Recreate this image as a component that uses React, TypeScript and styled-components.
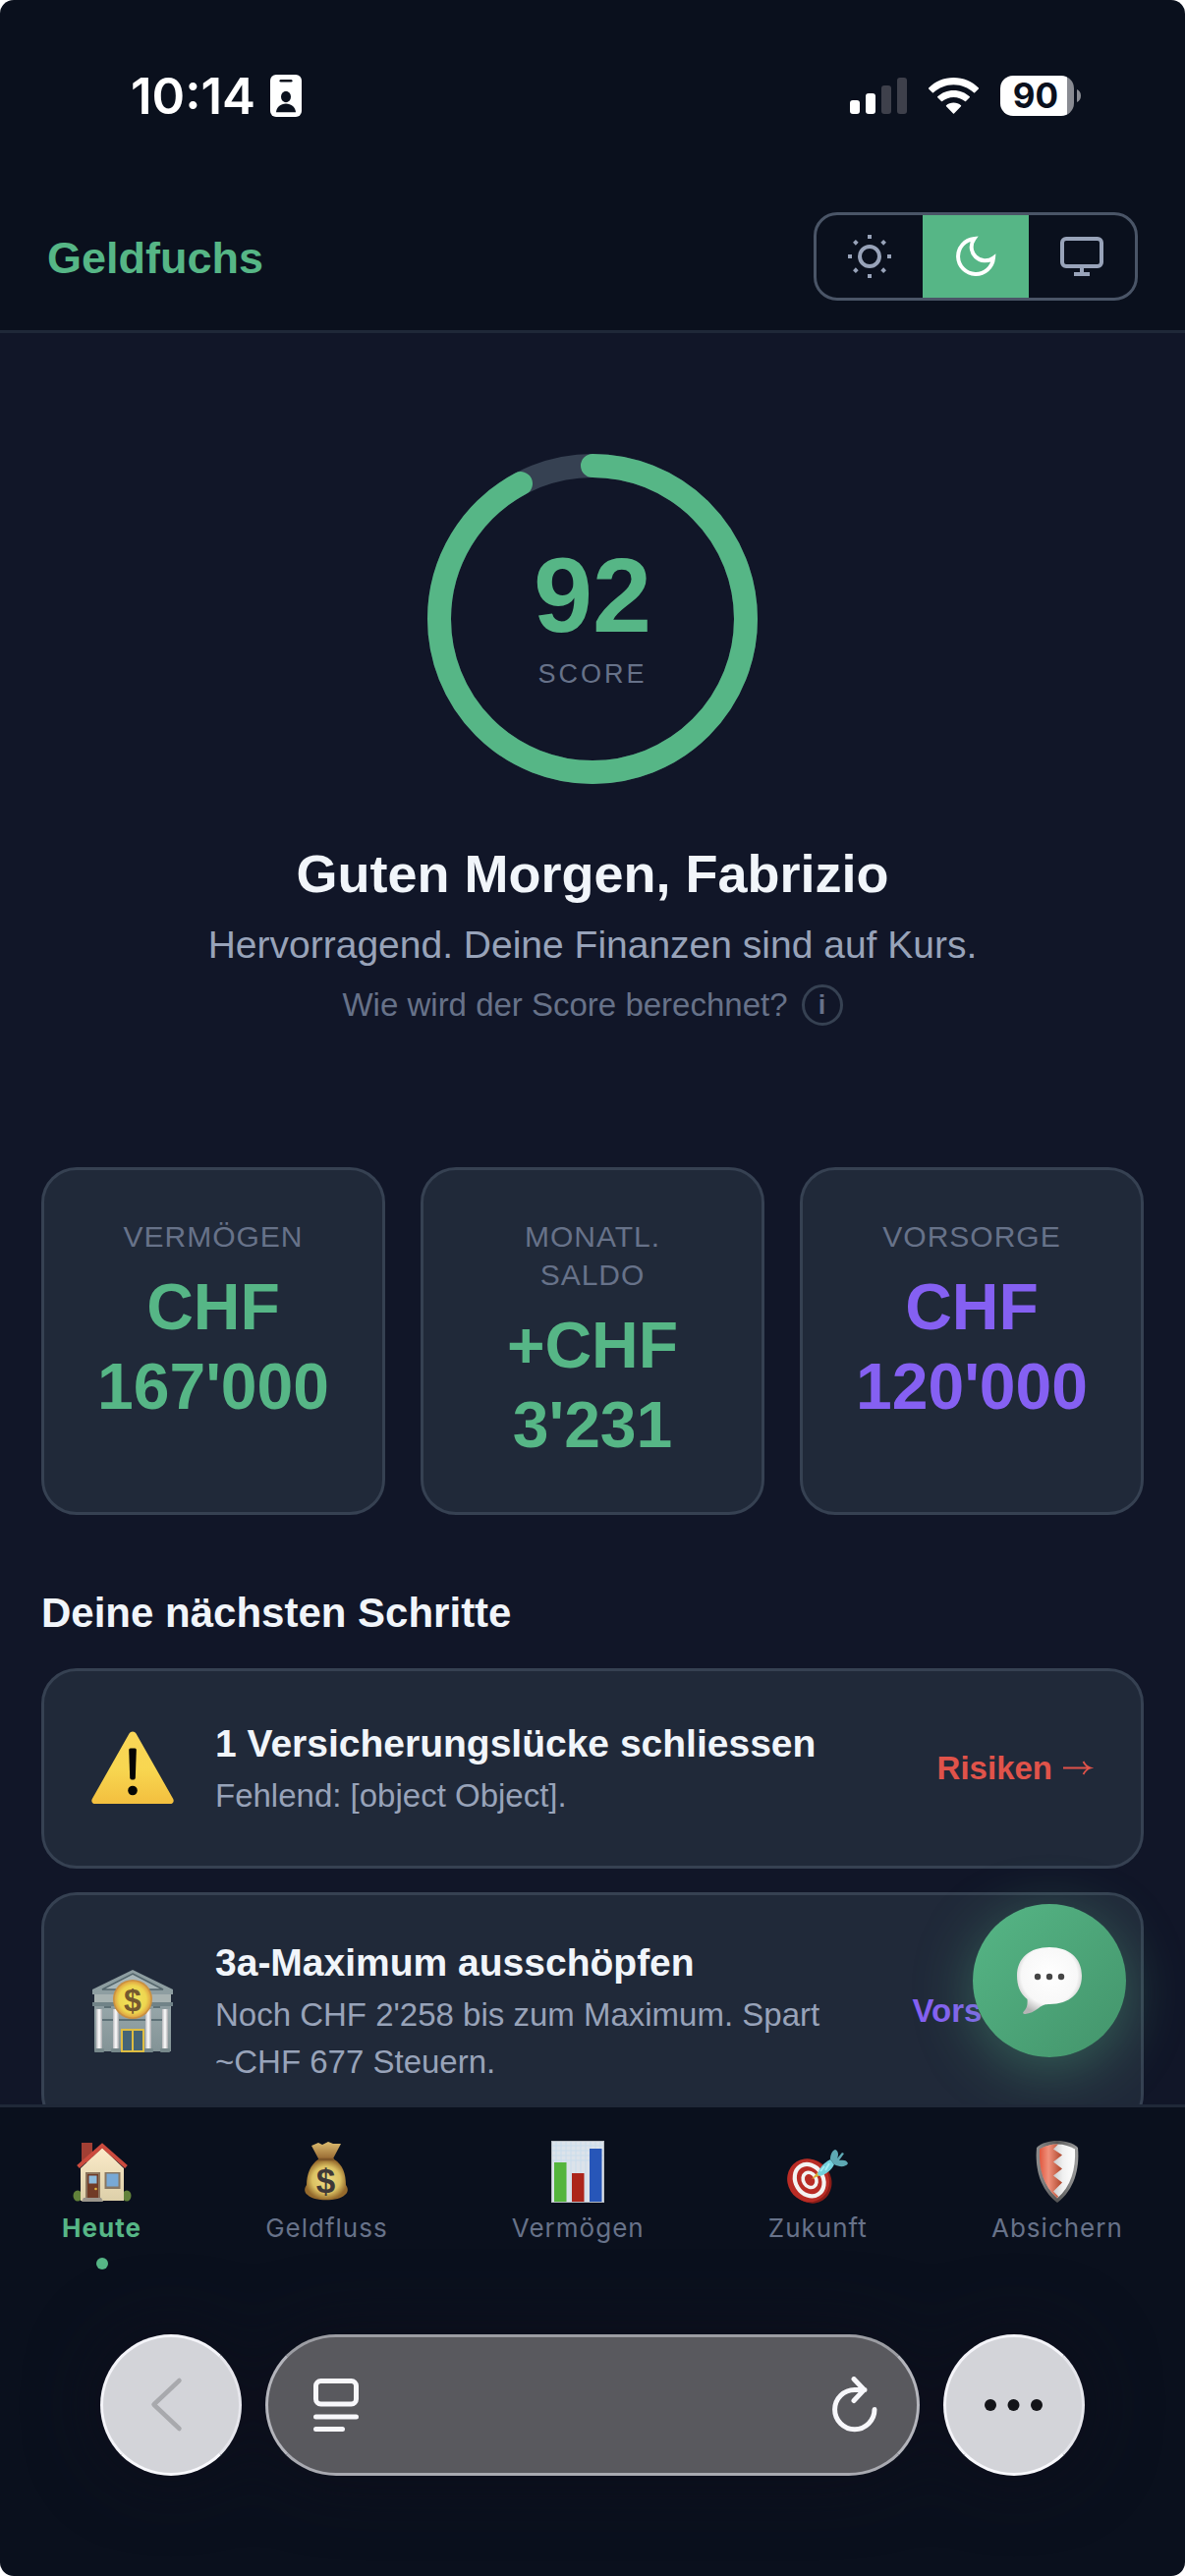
import React, { useState } from "react";
import styled, { createGlobalStyle, css } from "styled-components";

const color = {
  chrome: "#0a101d",
  page: "#111628",
  card: "#202939",
  line: "#364152",
  control: "#4a5567",
  text: "#f1f5fa",
  soft: "#98a3b9",
  muted: "#677289",
  green: "#56b686",
  purple: "#8560f2",
  red: "#e0534a",
};

const sans = `"Liberation Sans", Arial, Helvetica, sans-serif`;
const system = `Inter, "Liberation Sans", sans-serif`;

const GlobalStyle = createGlobalStyle`
  *, *::before, *::after { box-sizing: border-box; }
  html, body { margin: 0; padding: 0; background: #ffffff; }
  body { font-family: ${sans}; color: ${color.text}; }
  h1, h2, h3, p { margin: 0; }
  button { font: inherit; border: 0; padding: 0; background: none; color: inherit; cursor: pointer; }
  a { color: inherit; text-decoration: none; }
  svg { display: block; flex: none; }
`;

const Screen = styled.div`
  display: flex;
  flex-direction: column;
  height: 100vh;
  overflow: hidden;
  border-radius: 14px;
  background: ${color.chrome};
`;

/* ---------- status bar ---------- */

const StatusBar = styled.div`
  display: flex;
  align-items: center;
  justify-content: space-between;
  height: 186px;
  padding: 69px 106px 60px 133px;
  font-family: ${system};
`;

const StatusGroup = styled.div<{ $gap: number }>`
  display: flex;
  align-items: center;
  gap: ${(p) => p.$gap}px;
`;

const Clock = styled.span`
  font-size: 51px;
  line-height: 57px;
  font-weight: 600;
  color: #ffffff;
`;

const Battery = styled.div`
  display: flex;
  align-items: center;
  gap: 3px;
`;

const BatteryBody = styled.div`
  width: 75px;
  height: 41px;
  border-radius: 13px;
  padding-right: 3px;
  background: linear-gradient(90deg, #ffffff 0 68px, #898b92 68px);
  color: ${color.chrome};
  font-size: 35px;
  line-height: 41px;
  font-weight: 700;
  text-align: center;
`;

/* ---------- header ---------- */

const Header = styled.header`
  display: flex;
  align-items: center;
  justify-content: space-between;
  padding: 30px 48px;
  border-bottom: 3px solid #1f2838;
`;

const Brand = styled.a`
  padding-top: 4px;
  font-size: 45px;
  line-height: 54px;
  font-weight: 700;
  color: ${color.green};
`;

const ThemeSwitch = styled.div`
  display: flex;
  overflow: hidden;
  border: 3px solid ${color.control};
  border-radius: 24px;
`;

const ThemeButton = styled.button<{ $active: boolean }>`
  display: grid;
  place-items: center;
  width: 108px;
  height: 84px;
  color: ${(p) => (p.$active ? "#ffffff" : color.soft)};
  background: ${(p) => (p.$active ? color.green : "transparent")};
`;

/* ---------- content ---------- */

const Viewport = styled.div`
  position: relative;
  flex: 1;
  min-height: 0;
  overflow: hidden;
  background: ${color.page};
`;

const Main = styled.main`
  padding: 123px 42px 0;
`;

const Hero = styled.section`
  display: flex;
  flex-direction: column;
  align-items: center;
  text-align: center;
`;

const Gauge = styled.div`
  display: grid;
  place-items: center;
  width: 336px;
  height: 336px;
  > * { grid-area: 1 / 1; }
`;

const GaugeText = styled.div`
  display: flex;
  flex-direction: column;
  align-items: center;
  gap: 8px;
  padding-bottom: 4px;
`;

const GaugeValue = styled.span`
  font-size: 108px;
  line-height: 108px;
  font-weight: 700;
  color: ${color.green};
`;

const GaugeLabel = styled.span`
  font-size: 27px;
  line-height: 36px;
  letter-spacing: 3px;
  color: ${color.muted};
`;

const Greeting = styled.h1`
  margin-top: 58px;
  font-size: 54px;
  line-height: 66px;
  font-weight: 700;
`;

const Verdict = styled.p`
  margin-top: 13px;
  font-size: 39px;
  line-height: 54px;
  color: ${color.soft};
`;

const ScoreHelp = styled.button`
  display: flex;
  align-items: center;
  gap: 14px;
  margin-top: 13px;
  font-size: 33px;
  line-height: 42px;
  color: ${color.muted};
`;

const InfoMark = styled.span`
  width: 42px;
  height: 42px;
  border: 3px solid ${color.line};
  border-radius: 50%;
  font-size: 27px;
  line-height: 36px;
  font-weight: 700;
`;

const Stats = styled.section`
  display: grid;
  grid-template-columns: repeat(3, 1fr);
  gap: 36px;
  margin-top: 144px;
`;

const panel = css`
  border: 3px solid ${color.line};
  border-radius: 36px;
  background: ${color.card};
`;

const StatCard = styled.article`
  ${panel}
  padding: 48px;
  text-align: center;
`;

const StatLabel = styled.h2`
  font-size: 30px;
  line-height: 39px;
  font-weight: 400;
  letter-spacing: 1px;
  text-transform: uppercase;
  color: ${color.muted};
`;

const StatValue = styled.p<{ $tone: string }>`
  margin-top: 12px;
  font-size: 66px;
  line-height: 81px;
  font-weight: 700;
  color: ${(p) => p.$tone};
`;

const SectionTitle = styled.h2`
  margin: 73px 0 29px;
  font-size: 42px;
  line-height: 54px;
  font-weight: 700;
`;

const StepList = styled.ul`
  display: flex;
  flex-direction: column;
  gap: 24px;
  margin: 0;
  padding: 0;
  list-style: none;
`;

const StepCard = styled.li`
  ${panel}
  display: flex;
  align-items: center;
  gap: 36px;
  padding: 42px;
`;

const StepIcon = styled.div`
  display: grid;
  place-items: center;
  width: 96px;
  height: 114px;
`;

const StepBody = styled.div`
  flex: 1;
  min-width: 0;
  padding-top: 2px;
`;

const StepTitle = styled.h3`
  margin-bottom: 4px;
  font-size: 39px;
  line-height: 50px;
  font-weight: 700;
`;

const StepText = styled.p`
  font-size: 33px;
  line-height: 48px;
  color: ${color.soft};
`;

const StepLink = styled.a<{ $tone: string }>`
  display: flex;
  align-items: center;
  gap: 9px;
  font-size: 33px;
  line-height: 48px;
  font-weight: 700;
  white-space: nowrap;
  color: ${(p) => p.$tone};
`;

const ChatButton = styled.button`
  position: absolute;
  right: 60px;
  bottom: 48px;
  display: grid;
  place-items: center;
  width: 156px;
  height: 156px;
  border-radius: 50%;
  background: linear-gradient(135deg, #56b686, #43946b);
  box-shadow: 0 12px 60px rgba(86, 182, 134, 0.4);
`;

/* ---------- tab bar ---------- */

const TabBar = styled.nav`
  display: flex;
  justify-content: space-around;
  height: 234px;
  padding-top: 33px;
  border-top: 3px solid #1f2838;
  font-family: ${system};
`;

const Tab = styled.a<{ $active: boolean }>`
  display: flex;
  flex-direction: column;
  align-items: center;
  font-size: 26px;
  line-height: 36px;
  letter-spacing: 1px;
  font-weight: ${(p) => (p.$active ? 700 : 400)};
  color: ${(p) => (p.$active ? color.green : color.muted)};
`;

const TabIcon = styled.span`
  height: 66px;
  margin-bottom: 6px;
`;

const TabDot = styled.span`
  width: 12px;
  height: 12px;
  margin-top: 12px;
  border-radius: 50%;
  background: ${color.green};
`;

/* ---------- browser bar ---------- */

const BrowserBar = styled.div`
  display: flex;
  gap: 24px;
  padding: 0 102px 102px;
  filter: drop-shadow(0 0 36px rgba(14, 13, 26, 0.7));
`;

const RoundButton = styled.button`
  display: grid;
  place-items: center;
  width: 144px;
  height: 144px;
  border: 3px solid;
  border-color: #f4f4f9 #e6e6ec #f8f8fc #f4f4f9;
  border-radius: 50%;
  background: #d3d4d9;
  color: #131418;
  &:disabled { color: #a8a9ad; cursor: default; }
`;

const AddressBar = styled.div`
  display: flex;
  flex: 1;
  align-items: center;
  justify-content: space-between;
  height: 144px;
  padding: 0 38px 0 44px;
  border: 3px solid;
  border-color: #9c9da3 #b4b5bc #a9aab1 #b4b5bc;
  border-radius: 72px;
  background: #59595e;
  color: #f7f7fb;
`;

/* ---------- drawings ---------- */

const StatusIdIcon = () => (
  <svg width="32" height="43" viewBox="0 0 32 43" aria-hidden="true">
    <rect width="32" height="43" rx="6" fill="#fff" />
    <rect x="9.500" y="5" width="13" height="2.600" rx="1.300" fill={color.chrome} />
    <ellipse cx="16" cy="22.500" rx="5" ry="5.700" fill={color.chrome} />
    <path d="M6 38.300c.3-5 4.500-8.800 10-8.800s9.700 3.800 10 8.800z" fill={color.chrome} />
  </svg>
);

const SignalIcon = () => (
  <svg width="58" height="37" viewBox="0 0 58 37" aria-hidden="true">
    <rect x="0" y="23" width="10" height="14" rx="3" fill="#fff" />
    <rect x="16" y="16" width="10" height="21" rx="3" fill="#fff" />
    <rect x="32" y="8" width="10" height="29" rx="3" fill="#3e404b" />
    <rect x="48" y="0" width="10" height="37" rx="3" fill="#3e404b" />
  </svg>
);

const WifiIcon = () => (
  <svg width="51" height="37" viewBox="0 0 51 37" fill="#fff" aria-hidden="true">
    <path d="M25.500 0C35.500 0 44.500 4 51 10.500c.2.300.2.700-.1 1l-3.800 3.800c-.3.300-.8.300-1.100 0C40.500 10.200 33.300 7.200 25.500 7.200S10.500 10.200 5 15.300c-.3.300-.8.300-1.100 0L.1 11.500c-.3-.3-.3-.7 0-1C6.500 4 15.500 0 25.500 0z" />
    <path d="M25.500 13c6.300 0 12 2.400 16.300 6.300.3.300.3.700 0 1l-3.800 3.800c-.3.300-.7.300-1 0-3-2.500-7-4.200-11.500-4.200S17 21.600 14 24.100c-.3.300-.7.300-1 0l-3.800-3.800c-.3-.3-.3-.7 0-1C13.500 15.400 19.200 13 25.500 13z" />
    <path d="M25.500 25.500c2.900 0 5.500 1 7.500 2.800.3.300.3.700 0 1l-7 7.300c-.3.300-.7.300-1 0l-7-7.300c-.3-.3-.3-.7 0-1 2-1.800 4.600-2.800 7.500-2.800z" />
  </svg>
);

const LineIcon = ({ children }: { children: React.ReactNode }) => (
  <svg width="48" height="48" viewBox="0 0 24 24" fill="none" stroke="currentColor" strokeWidth="2" aria-hidden="true">
    {children}
  </svg>
);

const SunIcon = () => (
  <LineIcon>
    <circle cx="12" cy="12" r="5" />
    <path d="M12 1v2M12 21v2M4.220 4.220l1.420 1.420M18.360 18.360l1.420 1.420M1 12h2M21 12h2M4.220 19.780l1.420-1.420M18.360 5.640l1.420-1.420" />
  </LineIcon>
);
const MoonIcon = () => (
  <LineIcon>
    <path d="M21 12.790A9 9 0 1 1 11.210 3 7 7 0 0 0 21 12.790z" />
  </LineIcon>
);
const MonitorIcon = () => (
  <LineIcon>
    <rect x="2" y="3" width="20" height="14" rx="2" />
    <path d="M8 21h8M12 17v4" />
  </LineIcon>
);

const ScoreRing = ({ value }: { value: number }) => (
  <svg width="336" height="336" viewBox="0 0 336 336" fill="none" strokeWidth="24" aria-hidden="true">
    <circle cx="168" cy="168" r="156" stroke={color.line} />
    <circle
      cx="168"
      cy="168"
      r="156"
      stroke={color.green}
      strokeLinecap="round"
      pathLength={100}
      strokeDasharray={`${value} 100`}
      transform="rotate(-90 168 168)"
    />
  </svg>
);

const ArrowIcon = () => (
  <svg width="39" height="20" viewBox="0 0 39 20" fill="none" stroke="currentColor" strokeWidth="1.800" aria-hidden="true">
    <path d="M2 9.500h28M22.500 3c1.500 3 4 5.500 7.500 6.500-3.500 1-6 3.500-7.500 6.500" />
  </svg>
);

const WarningIcon = () => (
  <svg width="84" height="76" viewBox="0 0 84 76" aria-hidden="true">
    <defs>
      <linearGradient id="warn" x1="0" y1="0" x2="0" y2="1">
        <stop offset="0" stopColor="#f9d557" />
        <stop offset=".5" stopColor="#f8d751" />
        <stop offset="1" stopColor="#f3bf3f" />
      </linearGradient>
    </defs>
    <path d="M38.500 2.500C40-.2 44-.2 45.500 2.500L83.200 69c1.400 2.700-.3 5-3.200 5H4c-2.900 0-4.600-2.300-3.200-5z" fill="url(#warn)" />
    <path d="M38.200 19q0-1.500 1.500-1.500h4.600q1.500 0 1.500 1.500L44.800 47.500q-.2 2-1.800 2h-2q-1.600 0-1.800-2z" fill="#050505" />
    <circle cx="42" cy="60.500" r="4.800" fill="#050505" />
  </svg>
);

const BankIcon = () => (
  <svg width="84" height="84" viewBox="0 0 84 84" aria-hidden="true">
    <defs>
      <linearGradient id="stone" x1="0" y1="0" x2="0" y2="1">
        <stop offset="0" stopColor="#9cabae" />
        <stop offset="1" stopColor="#839396" />
      </linearGradient>
      <linearGradient id="pillar">
        <stop offset="0" stopColor="#b9b9bd" />
        <stop offset=".5" stopColor="#ffffff" />
        <stop offset="1" stopColor="#a8a8ac" />
      </linearGradient>
      <radialGradient id="coin">
        <stop offset="0" stopColor="#f0e65c" />
        <stop offset=".75" stopColor="#eed650" />
        <stop offset="1" stopColor="#dfa443" />
      </radialGradient>
    </defs>
    <path d="M42 0 83 20v5H1v-5z" fill="#8e9ea1" />
    <path d="M42 4 73 20H11z" fill="#a9b7b9" stroke="#54666c" strokeWidth="1.500" />
    <rect x="3" y="25" width="78" height="58" fill="url(#stone)" />
    <rect x="3" y="25" width="78" height="8" fill="#a8b3b2" />
    <rect x="1" y="33" width="82" height="4" fill="#718388" />
    <path d="M11 51h62M11 38h62" stroke="#5d7076" strokeWidth="2" />
    {[4, 21, 54, 71].map((x) => (
      <g key={x}>
        <rect x={x + 1} y="38" width="6" height="43" fill="url(#pillar)" />
        <rect x={x - 1} y="80" width="10" height="4" rx="1" fill="#77888b" />
        <rect x={x - 1} y="37" width="10" height="3" fill="#8c9b9f" />
      </g>
    ))}
    <rect x="31" y="61" width="22" height="22" fill="#456476" stroke="#dfbd41" strokeWidth="2" />
    <path d="M42 61v22" stroke="#dfbd41" strokeWidth="2" />
    <circle cx="42" cy="30" r="20" fill="#c99041" />
    <circle cx="42" cy="30" r="18.500" fill="url(#coin)" />
    <text x="42" y="41.500" textAnchor="middle" fontFamily="Liberation Sans, sans-serif" fontWeight="700" fontSize="32" fill="#75592f">$</text>
  </svg>
);

const BubbleIcon = () => (
  <svg width="68" height="68" viewBox="0 0 68 68" aria-hidden="true">
    <defs>
      <radialGradient id="bubble" cx=".5" cy=".42" r=".6">
        <stop offset="0" stopColor="#ffffff" />
        <stop offset=".72" stopColor="#f8f8f8" />
        <stop offset="1" stopColor="#b5b5b5" />
      </radialGradient>
    </defs>
    <path d="M34 0c20 0 33 11 33 29S54 58 34 58c-3.500 0-7 .5-11 4-4.500 3.500-9 5.500-13.500 6-2.500.2-3-1.200-1.500-2.700 3-3 4-7 3.500-12.300C4.500 47.500 1 39.500 1 29 1 11 14 0 34 0z" fill="url(#bubble)" />
    <g fill="#454545">
      <circle cx="22" cy="30" r="3.200" />
      <circle cx="34" cy="30" r="3.200" />
      <circle cx="46" cy="30" r="3.200" />
    </g>
  </svg>
);

const HouseIcon = () => (
  <svg width="66" height="66" viewBox="0 0 66 66" aria-hidden="true">
    <defs>
      <linearGradient id="wall" x1="0" y1="0" x2="0" y2="1">
        <stop offset="0" stopColor="#fbebc9" />
        <stop offset="1" stopColor="#ddd0a9" />
      </linearGradient>
    </defs>
    <ellipse cx="8" cy="57" rx="4.500" ry="5.500" fill="#62823a" />
    <ellipse cx="58" cy="57" rx="4.500" ry="5.500" fill="#62823a" />
    <rect x="12" y="3" width="11" height="20" fill="#a13f34" />
    <path d="M11 29 33 8l22 21v33H11z" fill="url(#wall)" />
    <path d="M8.500 27.500 33 6l24.500 21.500" fill="none" stroke="#cc4b3e" strokeWidth="4" />
    <rect x="16" y="33" width="15" height="28" fill="#8b755d" />
    <rect x="18" y="35" width="11" height="25" fill="#713b26" />
    <rect x="19.500" y="36.500" width="8" height="8" fill="#8dbbdc" />
    <circle cx="26.500" cy="50" r="1.300" fill="#e3b53f" />
    <rect x="35.500" y="33" width="16" height="17" fill="#877662" />
    <rect x="37.500" y="34.500" width="12" height="13" fill="#78a9d6" />
    <path d="M12 63l2-4h18l2 4z" fill="#9c968c" />
  </svg>
);

const MoneyBagIcon = () => (
  <svg width="66" height="66" viewBox="0 0 66 66" aria-hidden="true">
    <defs>
      <radialGradient id="bag">
        <stop offset="0" stopColor="#efdd86" />
        <stop offset=".65" stopColor="#dcc263" />
        <stop offset="1" stopColor="#956a2c" />
      </radialGradient>
      <linearGradient id="neck" x1="0" y1="0" x2="0" y2="1">
        <stop offset="0" stopColor="#ddbd71" />
        <stop offset="1" stopColor="#91622c" />
      </linearGradient>
    </defs>
    <path d="M18 6l7-3 4 2 6-3 5 2 8 0-9 17H26z" fill="url(#neck)" />
    <path d="M25 20h16c9 5 12 15 12 26 3 4 2 8-1 10-6 7-32 7-38 0-3-2-4-6-1-10 0-11 4-21 12-26z" fill="url(#bag)" />
    <path d="M25 20h16" stroke="#7f5728" strokeWidth="2.500" />
    <text x="33" y="54" textAnchor="middle" fontFamily="Liberation Sans, sans-serif" fontWeight="700" fontSize="35" fill="#3f3938">$</text>
  </svg>
);

const ChartIcon = () => (
  <svg width="66" height="66" viewBox="0 0 66 66" aria-hidden="true">
    <rect x="6" y="1" width="54" height="63" fill="#dce3ea" />
    <path d="M6 6h54M6 11h54M6 16h54M6 21h54M11 1v63M16 1v63M21 1v63M26 1v63M31 1v63M36 1v63M41 1v63M46 1v63M51 1v63M56 1v63" stroke="#c9dcec" strokeWidth="1" />
    <rect x="9" y="23" width="12.500" height="41" fill="#55b53c" />
    <rect x="27" y="34" width="12.500" height="30" fill="#ac251b" />
    <rect x="45" y="9" width="12.500" height="55" fill="#2756b8" />
    <rect x="6.500" y="1.500" width="53" height="62" fill="none" stroke="#b7bcc2" strokeWidth="1" />
  </svg>
);

const TargetIcon = () => (
  <svg width="66" height="66" viewBox="0 0 66 66" aria-hidden="true">
    <g transform="rotate(-32 24 41)">
      <ellipse cx="25" cy="43" rx="21" ry="23" fill="#8a1d18" />
      <ellipse cx="23.500" cy="41" rx="21" ry="22.500" fill="#b92c25" />
      <ellipse cx="24.500" cy="41.500" rx="14" ry="17" fill="none" stroke="#f4f3f2" strokeWidth="4.200" />
      <ellipse cx="25" cy="41.500" rx="6.500" ry="8" fill="none" stroke="#f4f3f2" strokeWidth="3.600" />
    </g>
    <path d="M27 40l6-7 3 3z" fill="#dcae34" />
    <path d="M33 35c2-7 7-12 13-15l4 5c-3 6-8 10-15 12z" fill="#74d1dc" />
    <path d="M46 20c0-5 2-9 5-10 3 1 4 5 2 9l5-6 2 1-5 7c5-1 8 0 9 3-2 4-9 4-14 1z" fill="#5ea9b4" />
    <path d="M36 32l4-5M41 31l4-7" stroke="#a5eef3" strokeWidth="2" />
  </svg>
);

const ShieldIcon = () => (
  <svg width="66" height="66" viewBox="0 0 66 66" aria-hidden="true">
    <defs>
      <linearGradient id="rim" x1="0" y1="0" x2="1" y2="0">
        <stop offset="0" stopColor="#8e8e8e" />
        <stop offset=".5" stopColor="#555555" />
        <stop offset="1" stopColor="#a2a2a2" />
      </linearGradient>
      <linearGradient id="redHalf">
        <stop offset="0" stopColor="#e0573e" />
        <stop offset=".4" stopColor="#f0917c" />
        <stop offset="1" stopColor="#ae452b" />
      </linearGradient>
      <linearGradient id="whiteHalf">
        <stop offset="0" stopColor="#8f9194" />
        <stop offset=".65" stopColor="#f0f0f0" />
        <stop offset="1" stopColor="#ffffff" />
      </linearGradient>
    </defs>
    <path d="M33 1c8 0 16 2 21 7 2 22-4 43-21 56C16 51 10 30 12 8c5-5 13-7 21-7z" fill="url(#rim)" />
    <path d="M33 4.500c7 0 13 2 18 5 1 20-4 38-18 50C19 47 14 30 15 9.500c5-3 11-5 18-5z" fill="url(#whiteHalf)" />
    <path d="M34 4.500l-5 5 9 6-9 7 9 7-9 7 9 7-9 9 5 5-1 2C19 47 14 30 15 9.500c5-3 11-5 19-5z" fill="url(#redHalf)" />
  </svg>
);

const BackIcon = () => (
  <svg width="138" height="138" viewBox="0 0 138 138" fill="none" stroke="currentColor" strokeWidth="4.500" strokeLinecap="round" strokeLinejoin="round" aria-hidden="true">
    <path d="M77.500 44 51.500 68.500 77.500 93" />
  </svg>
);

const ReaderIcon = () => (
  <svg width="50" height="58" viewBox="0 0 50 58" fill="none" stroke="currentColor" strokeWidth="5" strokeLinecap="round" aria-hidden="true">
    <rect x="4.500" y="4.500" width="41" height="23.500" rx="5" />
    <path d="M4.500 41h41M4.500 53.500h27" />
  </svg>
);

const ReloadIcon = () => (
  <svg width="50" height="58" viewBox="0 0 50 58" fill="none" stroke="currentColor" strokeWidth="5" strokeLinecap="round" strokeLinejoin="round" aria-hidden="true">
    <path d="M45 33.500A20.200 20.200 0 1 1 25 13.400H35M24 2.500 34.500 13.400 24 24.500" />
  </svg>
);

const MoreIcon = () => (
  <svg width="60" height="12" viewBox="0 0 60 12" fill="currentColor" aria-hidden="true">
    <circle cx="6" cy="6" r="6" />
    <circle cx="29.500" cy="6" r="6" />
    <circle cx="53" cy="6" r="6" />
  </svg>
);

/* ---------- data ---------- */

const score = 92.25;

const themes = [
  { id: "light", label: "Hell", Icon: SunIcon },
  { id: "dark", label: "Dunkel", Icon: MoonIcon },
  { id: "system", label: "System", Icon: MonitorIcon },
];

const stats = [
  { label: "Vermögen", value: "CHF 167'000", tone: color.green },
  { label: "Monatl. Saldo", value: "+CHF 3'231", tone: color.green },
  { label: "Vorsorge", value: "CHF 120'000", tone: color.purple },
];

const steps = [
  {
    Icon: WarningIcon,
    title: "1 Versicherungslücke schliessen",
    text: "Fehlend: [object Object].",
    link: "Risiken",
    tone: color.red,
  },
  {
    Icon: BankIcon,
    title: "3a-Maximum ausschöpfen",
    text: "Noch CHF 2'258 bis zum Maximum. Spart ~CHF 677 Steuern.",
    link: "Vorsorge",
    tone: color.purple,
  },
];

const tabs = [
  { label: "Heute", Icon: HouseIcon },
  { label: "Geldfluss", Icon: MoneyBagIcon },
  { label: "Vermögen", Icon: ChartIcon },
  { label: "Zukunft", Icon: TargetIcon },
  { label: "Absichern", Icon: ShieldIcon },
];

export default function App() {
  const [theme, setTheme] = useState("dark");
  const [tab, setTab] = useState("Heute");

  return (
    <>
      <GlobalStyle />
      <Screen>
        <StatusBar>
          <StatusGroup $gap={15}>
            <Clock>10:14</Clock>
            <StatusIdIcon />
          </StatusGroup>
          <StatusGroup $gap={22}>
            <SignalIcon />
            <WifiIcon />
            <Battery>
              <BatteryBody>90</BatteryBody>
              <svg width="4" height="13" viewBox="0 0 4 13" aria-hidden="true">
                <path d="M0 0c2.500 1 4 3.500 4 6.500S2.500 12 0 13z" fill="#898b92" />
              </svg>
            </Battery>
          </StatusGroup>
        </StatusBar>

        <Header>
          <Brand href="#heute">Geldfuchs</Brand>
          <ThemeSwitch role="group" aria-label="Farbschema">
            {themes.map(({ id, label, Icon }) => (
              <ThemeButton
                key={id}
                type="button"
                aria-label={label}
                aria-pressed={theme === id}
                $active={theme === id}
                onClick={() => setTheme(id)}
              >
                <Icon />
              </ThemeButton>
            ))}
          </ThemeSwitch>
        </Header>

        <Viewport>
          <Main>
            <Hero>
              <Gauge>
                <ScoreRing value={score} />
                <GaugeText>
                  <GaugeValue>{Math.round(score)}</GaugeValue>
                  <GaugeLabel>SCORE</GaugeLabel>
                </GaugeText>
              </Gauge>
              <Greeting>Guten Morgen, Fabrizio</Greeting>
              <Verdict>Hervorragend. Deine Finanzen sind auf Kurs.</Verdict>
              <ScoreHelp type="button">
                Wie wird der Score berechnet?
                <InfoMark>i</InfoMark>
              </ScoreHelp>
            </Hero>

            <Stats>
              {stats.map((s) => (
                <StatCard key={s.label}>
                  <StatLabel>{s.label}</StatLabel>
                  <StatValue $tone={s.tone}>{s.value}</StatValue>
                </StatCard>
              ))}
            </Stats>

            <SectionTitle>Deine nächsten Schritte</SectionTitle>
            <StepList>
              {steps.map(({ Icon, title, text, link, tone }) => (
                <StepCard key={title}>
                  <StepIcon>
                    <Icon />
                  </StepIcon>
                  <StepBody>
                    <StepTitle>{title}</StepTitle>
                    <StepText>{text}</StepText>
                  </StepBody>
                  <StepLink href={`#${link.toLowerCase()}`} $tone={tone}>
                    {link}
                    <ArrowIcon />
                  </StepLink>
                </StepCard>
              ))}
            </StepList>
          </Main>
          <ChatButton type="button" aria-label="Chat öffnen">
            <BubbleIcon />
          </ChatButton>
        </Viewport>

        <TabBar>
          {tabs.map(({ label, Icon }) => (
            <Tab
              key={label}
              href={`#${label.toLowerCase()}`}
              $active={tab === label}
              aria-current={tab === label ? "page" : undefined}
              onClick={() => setTab(label)}
            >
              <TabIcon>
                <Icon />
              </TabIcon>
              {label}
              {tab === label && <TabDot />}
            </Tab>
          ))}
        </TabBar>

        <BrowserBar>
          <RoundButton type="button" aria-label="Zurück" disabled>
            <BackIcon />
          </RoundButton>
          <AddressBar>
            <button type="button" aria-label="Seitenmenü">
              <ReaderIcon />
            </button>
            <button type="button" aria-label="Neu laden">
              <ReloadIcon />
            </button>
          </AddressBar>
          <RoundButton type="button" aria-label="Mehr">
            <MoreIcon />
          </RoundButton>
        </BrowserBar>
      </Screen>
    </>
  );
}
